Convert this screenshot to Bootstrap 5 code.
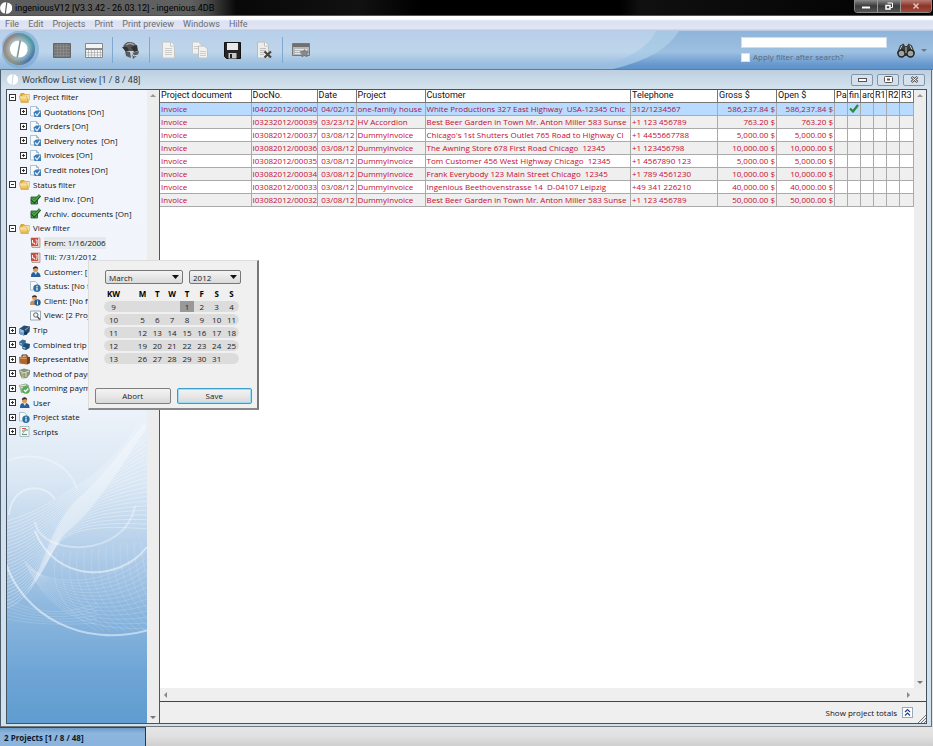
<!DOCTYPE html>
<html lang="en">
<head>
<meta charset="utf-8">
<meta name="viewport" content="width=device-width, initial-scale=1">
<title>ingeniousV12 [V3.3.42 - 26.03.12] - ingenious.4DB</title>
<link href="https://cdn.jsdelivr.net/npm/bootstrap@5.3.0/dist/css/bootstrap.min.css" rel="stylesheet">
<style>
body{font-family:"Open Sans","Noto Sans",sans-serif;font-size:8px;line-height:12px;color:#111;background:#e4e4e4;height:100vh;overflow:hidden}
button,input,select{font:inherit;color:inherit}
button{border:0;background:none;padding:0}
svg{display:block;flex:none}
.apptitle,.menus,.childbar,.docs th{font-family:Roboto,"Open Sans",sans-serif;font-size:9px}
.titlebar{height:16px;background:linear-gradient(90deg,#5d5d5d 0,#616161 190px,#4a4a4a 208px,#080808 236px,#111 360px,#000 420px,#000 620px,#101010 640px,#000);border-bottom:1px solid #555}
.apptitle{color:#000;height:15px;gap:3px}
.winctl{height:13px;border:1px solid #888;border-top:0;border-radius:0 0 4px 4px;overflow:hidden;margin-right:1px}
.winctl button{width:23px;background:linear-gradient(#8a8a8a,#3a3a3a 50%,#555);border-right:1px solid #999;display:flex;align-items:center;justify-content:center}
.winctl button:last-child{width:30px;border:0;background:linear-gradient(#b77c74,#8c3328 50%,#a04a3c)}
.menus{height:15px;background:linear-gradient(#fff 0,#fff 3px,#dae2f4 5px,#e2e4f3 13px,#b7cce2 14px);padding-left:5px;gap:9px}
.menus a{color:#6c6c6c;text-decoration:none}
.toolbar{height:39px;position:relative;background:linear-gradient(#8fb4da,#9cc0e0 55%,#6496cc 90%,#5f93ca);border-bottom:1px solid #5c7c98}
.toolbar .swoosh{position:absolute;left:0;top:0;width:700px;height:38px}
.tools{position:relative}
.tools button{width:32px;height:38px;display:flex;align-items:center;justify-content:center}
.tools .logo{width:46px;justify-content:flex-start;padding-left:2px}
.divide{width:5px;height:26px;border-left:1px solid #7fa9d2;margin-left:2px;margin-right:-2px}
.finder{width:146px;position:relative;padding-top:6px}
.finder input[type=text]{display:block;width:100%;height:11px;border:1px solid #cfdcea;background:#fff;padding:0 2px}
.finder label{gap:3px;color:#56687c;margin-top:3px}
.finder input[type=checkbox]{appearance:none;width:9px;height:9px;background:#fff;border:1px solid #d6e2ee;margin:0}
.search-go{position:relative;gap:6px;width:46px;padding-left:10px}
.child{background:linear-gradient(#bccfe0,#d4e2ee 18px,#cfe0ee);border-left:1px solid #4e5d6b;border-right:1px solid #5f6e7a;border-bottom:1px solid #777;margin-right:1px;padding:0 4px 2px 5px}
.childbar{height:19px;color:#333f4c;padding:0 2px 0 1px}
.childbar button{width:22px;height:12px;border:1px solid #8395a8;border-radius:2px;background:#d5e1ec;display:flex;align-items:center;justify-content:center}
.frame{border:1px solid #46525e;background:#fff;min-height:0}
.side{width:153px;flex:none;border-right:1px solid #555}
.treebox{position:relative;background:linear-gradient(#f2f6fc 0,#f1f5fb 48%,#d9e7f4 62%,#b6d0ea 72%,#8db7de 82%,#6ea5d6 92%,#609cd0);overflow:hidden}
.waves{position:absolute;left:0;bottom:0;width:100%;height:300px}
.tree{position:relative;height:349px;list-style:none;margin:0;padding:0;white-space:nowrap}
.tree li{flex:1;display:flex;align-items:center;gap:3px;padding-left:2px}
.tree li.sub{padding-left:13px}
.tree li.leaf{padding-left:23px}
.tree li.chosen span{background:#e6e9ec}
.expander{width:7px;height:7px;border:1px solid #333!important;position:relative;flex:none;background:linear-gradient(#333,#333) center/3px 1px no-repeat,#fff}
.expander.plus{background:linear-gradient(#333,#333) center/3px 1px no-repeat,linear-gradient(#333,#333) center/1px 3px no-repeat,#fff}
.vscroll{width:12px;background:#eeedee;color:#888;flex:none;padding:4px 0}
.hscroll{height:13px;background:#efeff0;color:#888;padding:0 16px 0 4px}
.tri-u,.tri-d{width:0;border:3px solid transparent}
.tri-u{border-bottom-color:#999;border-top:0}
.tri-d{border-top-color:#777;border-bottom:0}
.tri-l,.tri-r{width:0;border:3px solid transparent}
.tri-l{border-right-color:#888;border-left:0}
.tri-r{border-left-color:#888;border-right:0}
.docs{table-layout:fixed;width:100%;border-collapse:collapse;color:#c60c30}
.docs th,.docs td{height:13px;line-height:12px;padding:0 1px;border-right:1px solid #aaa;border-bottom:1px solid #aaa;white-space:nowrap;overflow:hidden;font-weight:400}
.docs th{color:#111;border-color:#777;height:12px;line-height:11px}
.docs th.tight{padding-right:0}
.docs tbody tr:nth-child(even){background:#efefef}
.docs tbody tr.picked{background:#b8dbff;color:#a3154f}
.docs td.num{text-align:right}
.docs svg{margin:auto}
.totals{height:22px;background:#efeff0;border-top:1px solid #444;gap:5px;padding-right:13px;position:relative}
.totals button{width:11px;height:11px;border:1px solid #9ab;background:#fff;color:#1d3f94}
.grip{position:absolute;right:0;bottom:0}
.calpop{position:absolute;left:88px;top:260px;width:171px;height:150px;background:#f0f0f0;border:1px solid #ddd;border-right:2px solid #777;border-bottom:2px solid #888;padding:9px 5px 4px 6px;color:#222}
.calpop select{appearance:none;height:14px;line-height:11px;border:1px solid #777;border-radius:2px;padding:0 3px;background:url("data:image/svg+xml,%3Csvg xmlns='http://www.w3.org/2000/svg' width='7' height='4'%3E%3Cpath d='M0 0h7L3.5 4z' fill='%23111'/%3E%3C/svg%3E") right 3px center no-repeat,linear-gradient(#f4f4f4,#dadada)}
.pickers{gap:6px;padding-left:10px}
.month{width:78px}
.year{width:52px}
.days{width:135px;margin:3px 0 0 9px;table-layout:fixed;border-collapse:separate;border-spacing:0;text-align:center}
.days th,.days td{padding:0;height:13px;line-height:11px}
.days th{color:#000;font-weight:700}
.days td{background:#dcdcdc;border-top:1px solid #f0f0f0;border-bottom:1px solid #f0f0f0}
.days td:first-child{border-radius:7px 0 0 7px}
.days td:last-child{border-radius:0 7px 7px 0}
.days td.today{background:#999}
.days tr>:first-child{text-align:center;padding-right:12px}
.calbtns{gap:6px}
.calbtns button{flex:1;height:16px;border:1px solid #808080;border-radius:2px;background:linear-gradient(#f3f3f3,#e8e8e8 50%,#d8d8d8)}
.calbtns .prime{border:1px solid #3c9ecb;box-shadow:inset 0 0 0 1px #9edcf3}
.status{height:19px;background:linear-gradient(#e6e6e6 0,#e0e0e0 9px,#cfcfcf)}
.status div{width:146px;height:19px;padding:4px 0 0 4px;background:linear-gradient(#6a9bc9,#8db5dd 5px,#8ab4dd);border-right:1px solid #333;border-top:1px solid #345;font-weight:700;color:#0b1a2b}
</style>
</head>
<body class="d-flex flex-column">
<svg width="0" height="0" class="position-absolute" aria-hidden="true">
<defs>
<linearGradient id="fold" x2="0" y2="1"><stop stop-color="#fff0b0"/><stop offset="1" stop-color="#e2ab3c"/></linearGradient>
<symbol id="i-folder" viewBox="0 0 11 11"><path d="M1 2.500 2 1h3l1 1.200h3.500V9H2z" fill="#d9a43b"/><path d="M3 2.500h7.500V8H4z" fill="#f7e3a0" stroke="#cf9f45" stroke-width=".5"/><path d="M0 4h7.500l2 6.500H2z" fill="url(#fold)" stroke="#c6923a" stroke-width=".5"/></symbol>
<symbol id="i-doc" viewBox="0 0 11 11"><path d="M.5.500h6l2 2V10h-8z" fill="#f5fafd" stroke="#8fa9bd" stroke-width=".7"/><path d="M6.500.5v2h2" fill="none" stroke="#7f9bb2" stroke-width=".7"/><path d="M3.500 6.500 6 4.500h5V11H4.500z" fill="#3f7cb6"/><path d="m5 7.500 2 2.200L10.200 5.500" stroke="#dff0ff" fill="none" stroke-width="1.200"/></symbol>
<symbol id="i-check" viewBox="0 0 11 11"><path d="M1 3h6.500v7H1z" fill="#58a05a" stroke="#1d5022" stroke-width=".8"/><path d="m1.500 5 2.800 3L10 1.300" fill="none" stroke="#1e5a20" stroke-width="3"/><path d="m2 5 2.300 2.300L9.700 1.300" fill="none" stroke="#4fae4a" stroke-width="1.300"/></symbol>
<symbol id="i-date" viewBox="0 0 11 11"><path d="M1 1h9v9.500H2z" fill="#e8d2cb" stroke="#a8857c" stroke-width=".7"/><path d="M1 1h7v8H1z" fill="#c9503f"/><path d="M2.500 3v3h2v1.500M5.500 3H7v3L6 8" fill="none" stroke="#fff" stroke-width=".9"/></symbol>
<symbol id="i-user" viewBox="0 0 11 11"><path d="M1 11c0-4 1-5 4.500-5s5 1.500 5 5z" fill="#2b5f98"/><path d="m4 6 2 3 1-3z" fill="#d3e5f3"/><circle cx="5.500" cy="3.500" r="2.600" fill="#dc9e60"/><path d="M2.800 3C3-.5 8-.8 8.200 3L6.500 2z" fill="#3c2412"/></symbol>
<symbol id="i-info" viewBox="0 0 11 11"><path d="M.5.500h5l2 2V9h-7z" fill="#f4f9fc" stroke="#96abbb" stroke-width=".7"/><circle cx="7" cy="7.200" r="3.700" fill="#2e6f9f"/><path d="M7 4.800v1.100M7 6.500v3" stroke="#fff" stroke-width="1.200"/></symbol>
<symbol id="i-client" viewBox="0 0 11 11"><path d="M0 10c0-3.500 1-4.500 4-4.500s4 1 4 4.500z" fill="#c19456"/><circle cx="4.500" cy="3" r="2.400" fill="#d9a069"/><path d="M2 2.500C2-.6 7-.6 7 2.500L4.500 1.800z" fill="#3b281b"/><circle cx="7.500" cy="7.500" r="3.200" fill="#245c94"/><path d="M7.500 5.500v1M7.500 7v2.500" stroke="#fff"/></symbol>
<symbol id="i-view" viewBox="0 0 11 11"><path d="M.5 1h10v9H.5z" fill="#f7f9fb" stroke="#8794a0" stroke-width=".8"/><circle cx="5.800" cy="5" r="2.200" fill="#eef6fb" stroke="#555" stroke-width=".9"/><path d="m7.300 6.700 2.500 2.800" stroke="#444" stroke-width="1.200"/></symbol>
<symbol id="i-trip" viewBox="0 0 11 11"><path d="m0 4 5-3.500 6 1L10.500 7 5 10.500.5 9z" fill="#234d76"/><path d="m0 4 5 1.500v5L.5 9z" fill="#6f9fc9"/><path d="m1 4.500 3 1v1.500L1 6zM6 5l3.500-2.500" stroke="#b8d8ef" stroke-width=".7" fill="none"/><circle cx="7" cy="8.500" r="1.400" fill="#162b42"/></symbol>
<symbol id="i-trips" viewBox="0 0 11 11"><path d="m0 3 3.500-2.500 3.500 1-.5 3L3 7 .5 6z" fill="#386c99"/><path d="m3 7 3.500-3 4.500 1-.5 4L7 11l-3.500-1z" fill="#1f4c75"/><path d="m3.500 7.500 3 1v1.500l-3-1zM.5 3.500l2.500.8v1.500L.8 5z" fill="#88b8db"/></symbol>
<symbol id="i-rep" viewBox="0 0 11 11"><path d="M3 3V1h5v2" stroke="#4d2a13" fill="none"/><path d="m0 3 8-.7 3 1V9l-3 1.500L.5 9.500z" fill="#b0652c"/><path d="M8 2.500 11 3.300V9l-3 1.500z" fill="#75401b"/><path d="m.5 4 7 .5" stroke="#e0a468"/></symbol>
<symbol id="i-pay" viewBox="0 0 11 11"><path d="m0 2 5-1.500L11 2v4L8 10l-5 .5L1 7z" fill="#87937a"/><path d="m1 3 4 2 5-2M3 5l1 5M7 5v4" stroke="#e2e7d0" fill="none"/><circle cx="4" cy="7.500" r="1.500" fill="#b9a65a"/></symbol>
<symbol id="i-income" viewBox="0 0 11 11"><path d="m0 2 7-1.500 3 2V9L2 10z" fill="#98a88e"/><path d="m1 3 6-1M1.500 5 4 4.500" stroke="#e8eedf"/><circle cx="7" cy="7" r="3.800" fill="#4fae50"/><path d="m5 7 1.500 1.700L9.300 5.500" stroke="#fff" stroke-width="1.200" fill="none"/></symbol>
<symbol id="i-script" viewBox="0 0 11 11"><path d="M1 .5h9v10H1z" fill="#f3f7f5" stroke="#9aaeb0" stroke-width=".8"/><path d="M3 2.500h4M3 5h2" stroke="#c8584f"/><path d="M5 4h4M3 8.500h5" stroke="#55957a"/><path d="m3 8 5-5" stroke="#888" stroke-width=".6"/></symbol>
<symbol id="i-mark" viewBox="0 0 12 12"><path d="M6.200.3A5.700 5.700 0 0 0 4.800 11.600zM7.400.4A5.700 5.700 0 0 1 5.900 11.700z" fill="#fff"/></symbol>
</defs>
</svg>

<header class="titlebar d-flex align-items-start justify-content-between flex-shrink-0">
  <div class="d-flex align-items-center apptitle"><svg width="12" height="12"><use href="#i-mark"/></svg><span>ingeniousV12 [V3.3.42 - 26.03.12] - ingenious.4DB</span></div>
  <div class="winctl d-flex">
    <button aria-label="Minimize"><svg width="10" height="8"><path d="M1 4.500h8v2H1z" fill="#fff"/></svg></button>
    <button aria-label="Restore"><svg width="10" height="9"><path d="M3.500 1h5v4.500h-2" fill="none" stroke="#fff"/><path d="M2 3.500h4V7H2z" fill="none" stroke="#fff" stroke-width="1.500"/></svg></button>
    <button aria-label="Close"><svg width="8" height="8"><path d="m1.500 1.500 5 5m0-5-5 5" stroke="#e2c4bd" stroke-width="1.500"/></svg></button>
  </div>
</header>
<nav class="menus d-flex align-items-center flex-shrink-0"><a href="#">File</a><a href="#">Edit</a><a href="#">Projects</a><a href="#">Print</a><a href="#">Print preview</a><a href="#">Windows</a><a href="#">Hilfe</a></nav>

<div class="toolbar d-flex flex-shrink-0">
  <svg class="swoosh" viewBox="0 0 700 38" preserveAspectRatio="none" aria-hidden="true"><defs><linearGradient id="sw" x2="0" y2="1"><stop stop-color="#b7cfe9"/><stop offset=".55" stop-color="#bed5eb"/><stop offset=".85" stop-color="#9dc0e1"/><stop offset="1" stop-color="#93b9dd"/></linearGradient></defs>
  <path d="M0 0H679Q664 26 613 38H0z" fill="#b2d3e9" opacity=".65"/><path d="M0 0H656Q646 24 592 38H0z" fill="url(#sw)"/></svg>
  <div class="tools d-flex align-items-center flex-grow-1">
    <button class="logo" aria-label="ingenious"><svg width="38" height="38" viewBox="0 0 38 38"><defs><linearGradient id="ring" x2="1" y2="1"><stop stop-color="#a8624e"/><stop offset=".3" stop-color="#8f9c98"/><stop offset=".6" stop-color="#5fa9b1"/><stop offset="1" stop-color="#3c4fa0"/></linearGradient><linearGradient id="ring2" x1="1" x2="0" y2="1"><stop stop-color="#1fa3a4"/><stop offset=".5" stop-color="#779" stop-opacity="0"/><stop offset="1" stop-color="#cf8a42"/></linearGradient><radialGradient id="halo"><stop offset=".4" stop-color="#e8f4f4" stop-opacity=".6"/><stop offset="1" stop-color="#fff" stop-opacity="0"/></radialGradient></defs><circle cx="18" cy="18.500" r="19" fill="#74a7d4" opacity=".6"/><circle cx="17" cy="18" r="16" fill="url(#ring)"/><circle cx="17" cy="18" r="16" fill="url(#ring2)"/><circle cx="17" cy="18" r="14" fill="url(#halo)"/><path d="M17.500 10A8 8 0 0 0 14.300 25.900zM19 10.200A8 8 0 0 1 16 26.200z" fill="#fff"/><path d="m18.300 9.500-3 17" stroke="#7f9097" stroke-width="1.300"/></svg></button>
    <button aria-label="List"><svg width="18" height="15"><path d="M.5.5h17v14H.5z" fill="#777" stroke="#666"/><path d="M1 3.500h16M1 6.500h16M1 9.500h16M1 12.500h16M4.500 1v13M7.500 1v13M10.500 1v13M13.500 1v13" stroke="#929292" stroke-width=".6"/></svg></button>
    <button aria-label="Table"><svg width="18" height="15"><path d="M.5.500h17v14H.5z" fill="#f4f4f4" stroke="#888"/><path d="M0 5h18v2H0z" fill="#85888a"/><path d="M1 9.500h16M1 12h16M3.500 7v7M6.500 7v7M9.500 7v7M12.500 7v7M15.500 7v7" stroke="#aaa" stroke-width=".7"/></svg></button>
    <span class="divide"></span>
    <button aria-label="Refresh"><svg width="18" height="18"><path d="M1 7C2 1 7 0 12 2l3 3v5H9L4 10z" fill="#555"/><path d="M0 6h5l2 3-3 2zM9 6l6-2 1 6-4 1z" fill="#333"/><path d="M4 4q4-3 8 0" stroke="#a7a7a7" fill="none" stroke-width="1.500"/><path d="m3 10 5 1 1 6-5-2zM10 12l7-2-1 4-5 4z" fill="#5a5a5a"/><path d="m10 12 2 3 4-1" fill="none" stroke="#ddd"/></svg></button>
    <span class="divide"></span>
    <button aria-label="New document"><svg width="15" height="18"><path d="M1.500 1h8L13.500 5v12h-12z" fill="#f1f1ed" stroke="#c2c6c8"/><path d="M9.500 1v4h4" fill="#fff" stroke="#c4c4c4"/><path d="M4 7.500h7M4 9.500h7M4 11.500h7M4 13.500h7" stroke="#ccc"/></svg></button>
    <button aria-label="Copy document"><svg width="18" height="18"><path d="M1.500 1h6l3 3v9h-9z" fill="#f1f1ed" stroke="#c6cacc"/><path d="M7.500 5h6l3 3v9h-9z" fill="#f1f1ed" stroke="#bec2c5"/><path d="M3 5.500h4M3 7.500h4M9 10.500h6M9 12.500h6M9 14.500h6" stroke="#ccc"/></svg></button>
    <button aria-label="Save"><svg width="17" height="17"><path d="M.5.500h16v16h-14l-2-2z" fill="#262626" stroke="#111"/><path d="M3 1h11v7H3z" fill="#e9e9e9"/><path d="M4.500 11h8v5.500h-8z" fill="#c9c9c9"/><path d="M6 12h2v4H6z" fill="#222"/></svg></button>
    <button aria-label="Delete document"><svg width="17" height="18"><path d="M1.500 1h7l4 4v12h-11z" fill="#ecece8" stroke="#b9bcbe"/><path d="M8.500 1v4h4" fill="#fff" stroke="#c0c0c0"/><path d="M4 7.500h6M4 9.500h6M4 11.500h4M4 13.500h4" stroke="#bfbfbf"/><path d="m8.500 10.500 6.500 6m0-6-6.500 6" stroke="#444" stroke-width="2.200"/></svg></button>
    <span class="divide"></span>
    <button aria-label="Form"><svg width="19" height="17"><path d="M.5 1.500h17v12H.5z" fill="#b4b8b8" stroke="#777"/><path d="M1 2h16v3H1z" fill="#707070"/><path d="M3 7.500h12M3 9.500h5M3 11.500h5" stroke="#e4e4e4"/><path d="m12.500 7.500 1.300 2 2.700.3-1.700 2 .4 3-2.700-1.200-2.700 1.200.4-3-1.700-2 2.700-.3z" fill="#8a8a8a" stroke="#666" stroke-width=".6"/></svg></button>
  </div>
  <div class="finder"><input type="text" aria-label="Search"><label class="d-flex align-items-center"><input type="checkbox"><span>Apply filter after search?</span></label></div>
  <div class="search-go d-flex align-items-center"><button aria-label="Find"><svg width="18" height="15"><path d="M0 10 3 2.500 6.500.5 8 3h2L11.500.5 15 2.500 18 10l-2 3H2z" fill="#3b3f3c"/><circle cx="4.500" cy="10.500" r="3.500" fill="#9da5a4" stroke="#222" stroke-width="1.400"/><circle cx="13.500" cy="10.500" r="3.500" fill="#9da5a4" stroke="#222" stroke-width="1.400"/><path d="m5 2.500-2 4M13 2.500l2 4" stroke="#c5cbc8"/><path d="M8 4h2v6H8z" fill="#777e7a"/></svg></button><span class="tri-d"></span></div>
</div>

<main class="child d-flex flex-column flex-grow-1 overflow-hidden">
  <div class="childbar d-flex align-items-center justify-content-between flex-shrink-0">
    <div class="d-flex align-items-center gap-1"><svg width="11" height="11"><use href="#i-mark"/></svg><span>Workflow List view [1 / 8 / 48]</span></div>
    <div class="d-flex gap-1"><button aria-label="Minimize list"><svg width="9" height="5"><rect x=".5" y="1.500" width="8" height="3" fill="#fff" stroke="#555"/></svg></button><button aria-label="Restore list"><svg width="9" height="7"><rect x=".5" y=".5" width="8" height="6" rx="1" fill="#fff" stroke="#555"/><path d="M3 2.500h3v2H3z" fill="#555"/></svg></button><button aria-label="Close list"><svg width="9" height="7"><path d="m1.500 1 6 5m0-5-6 5" stroke="#555" stroke-width="2.600"/><path d="m1.800 1.200 5.400 4.600m0-4.600-5.400 4.600" stroke="#fff"/></svg></button></div>
  </div>
  <div class="frame d-flex flex-grow-1">
    <aside class="side d-flex">
      <div class="treebox flex-grow-1">
        <svg class="waves" viewBox="0 0 140 300" preserveAspectRatio="none" aria-hidden="true"><g id="waves" fill="none" stroke="#fff"></g></svg>
        <ul class="tree d-flex flex-column" id="tree"></ul>
      </div>
      <div class="vscroll d-flex flex-column align-items-center justify-content-between"><span class="tri-u"></span><span class="tri-d"></span></div>
    </aside>
    <section class="d-flex flex-column flex-grow-1 overflow-hidden">
      <div class="d-flex flex-grow-1">
        <div class="flex-grow-1 overflow-hidden">
          <table class="docs">
            <colgroup><col style="width:91px"><col style="width:66px"><col style="width:39px"><col style="width:69px"><col><col style="width:87px"><col style="width:59px"><col style="width:58px"><col style="width:13px"><col style="width:13px"><col style="width:13px"><col style="width:13px"><col style="width:13px"><col style="width:14px"></colgroup>
            <thead><tr><th>Project document</th><th>DocNo.</th><th>Date</th><th>Project</th><th>Customer</th><th>Telephone</th><th>Gross $</th><th>Open $</th><th class="tight">Pai</th><th class="tight">fin.</th><th class="tight">arc</th><th class="tight">R1</th><th class="tight">R2</th><th class="tight">R3</th></tr></thead>
            <tbody id="rows"></tbody>
          </table>
        </div>
        <div class="vscroll d-flex flex-column align-items-center justify-content-between"><span class="tri-u"></span><span class="tri-d"></span></div>
      </div>
      <div class="hscroll d-flex align-items-center justify-content-between"><span class="tri-l"></span><span class="tri-r"></span></div>
      <div class="totals d-flex align-items-center justify-content-end"><label for="tot">Show project totals</label><button id="tot"><svg width="9" height="9"><path d="m2 4 2.500-2.500L7 4M2 7.500 4.500 5 7 7.500" fill="none" stroke="currentColor" stroke-width="1.200"/></svg></button><svg class="grip" width="9" height="9"><path d="m1 9 8-8M4 9l5-5M7 9l2-2" stroke="#777"/></svg></div>
    </section>
  </div>
</main>
<footer class="status flex-shrink-0"><div>2 Projects [1 / 8 / 48]</div></footer>

<div class="calpop d-flex flex-column">
  <div class="pickers d-flex"><select class="month" aria-label="Month"><option>March</option></select><select class="year" aria-label="Year"><option>2012</option></select></div>
  <table class="days"><colgroup><col style="width:31px"><col><col><col><col><col><col><col></colgroup><thead><tr><th>KW</th><th>M</th><th>T</th><th>W</th><th>T</th><th>F</th><th>S</th><th>S</th></tr></thead><tbody id="days"></tbody></table>
  <div class="calbtns d-flex mt-auto"><button>Abort</button><button class="prime">Save</button></div>
</div>

<script>
const tree=[["m","folder","Project filter"],["p","doc","Quotations [On]",1],["p","doc","Orders [On]",1],["p","doc","Delivery notes\u00a0 [On]",1],["p","doc","Invoices [On]",1],["p","doc","Credit notes [On]",1],["m","folder","Status filter"],["","check","Paid inv. [On]"],["","check","Archiv. documents [On]"],["m","folder","View filter"],["","date","From: 1/16/2006"],["","date","Till: 7/31/2012"],["","user","Customer: [No filter]"],["","info","Status: [No filter]"],["","client","Client: [No filter]"],["","view","View: [2 Projects]"],["p","trip","Trip"],["p","trips","Combined trip"],["p","rep","Representative"],["p","pay","Method of payment"],["p","income","Incoming payments"],["p","user","User"],["p","info","Project state"],["p","script","Scripts"]];
document.getElementById("tree").innerHTML=tree.map(([e,i,t,sub])=>`<li class="${sub?"sub":e?"":"leaf"} ${t.startsWith("From")?"chosen":""}">${e?`<button class="expander ${e==="p"?"plus":""}" aria-label="Toggle ${t}"></button>`:""}<svg width="11" height="11"><use href="#i-${i}"/></svg><span>${t}</span></li>`).join("");
const rows=[["I04022012/00040","04/02/12","one-family house","White Productions 327 East Highway\u00a0 USA-12345 Chic","312/1234567","586,237.84 $"],["I03232012/00039","03/23/12","HV Accordion","Best Beer Garden in Town Mr. Anton Miller 583 Sunse","+1 123 456789","763.20 $"],["I03082012/00037","03/08/12","DummyInvoice","Chicago's 1st Shutters Outlet 765 Road to Highway Cl","+1 4455667788","5,000.00 $"],["I03082012/00036","03/08/12","DummyInvoice","The Awning Store 678 First Road Chicago\u00a0 12345","+1 123456798","10,000.00 $"],["I03082012/00035","03/08/12","DummyInvoice","Tom Customer 456 West Highway Chicago\u00a0 12345","+1 4567890 123","5,000.00 $"],["I03082012/00034","03/08/12","DummyInvoice","Frank Everybody 123 Main Street Chicago\u00a0 12345","+1 789 4561230","10,000.00 $"],["I03082012/00033","03/08/12","DummyInvoice","Ingenious Beethovenstrasse 14\u00a0 D-04107 Leipzig","+49 341 226210","40,000.00 $"],["I03082012/00032","03/08/12","DummyInvoice","Best Beer Garden in Town Mr. Anton Miller 583 Sunse","+1 123 456789","50,000.00 $"]];
const tick='<svg width="10" height="9"><path d="m1 4.500 3 3L9 1" fill="none" stroke="#2c8a3b" stroke-width="2.200"/></svg>';
document.getElementById("rows").innerHTML=rows.map((r,n)=>`<tr class="${n?"":"picked"}"><td>Invoice</td><td>${r[0]}</td><td class="num">${r[1]}</td><td>${r[2]}</td><td>${r[3]}</td><td>${r[4]}</td><td class="num">${r[5]}</td><td class="num">${r[5]}</td><td></td><td>${n?"":tick}</td><td></td><td></td><td></td><td></td></tr>`).join("");
let h="";
for(let w=0;w<5;w++){h+=`<tr><td>${9+w}</td>`;for(let d=0;d<7;d++){const n=w*7+d-2;h+=`<td class="${n===1?"today":""}">${n>0&&n<32?n:""}</td>`}h+="</tr>"}
document.getElementById("days").innerHTML=h;
/* ribbon: lines blended between an upper and a lower edge curve */
const up=[0,98,30,90,55,72,75,60,95,48,120,20,138,-6],low=[0,185,25,175,35,145,48,125,61,105,90,102,142,106];
let g='<path d="M20 168C40 140 42 100 75 72 95 55 120 20 138 0L140 4C110 50 85 90 61 108 45 122 40 150 20 168z" fill="#fff" fill-opacity=".3" stroke="none"/>';
for(let i=0;i<=24;i++){const p=up.map((v,k)=>(v+(low[k]-v)*i/24).toFixed(1));g+=`<path d="M${p[0]} ${p[1]}C${p.slice(2).join(" ")}" stroke-opacity=".4" stroke-width=".8"/>`}
for(let i=0;i<14;i++)g+=`<path d="M${30-i} ${150-i}C${50} ${160+i*4} ${100+i} ${165+i*3} 140 ${128+i*6}" stroke-opacity=".2" stroke-width=".8"/><path d="M${50+i*7} ${130-i}C${40+i*8} ${165} ${60+i*8} 190 ${90+i*7} 208" stroke-opacity=".16" stroke-width=".8"/>`;
for(let i=0;i<6;i++)g+=`<path d="M0 ${176+i*4}C30 ${192+i*2} 60 ${192+i*2} 90 ${180+i*4}" stroke-opacity=".14"/>`;
g+='<path d="M28 99C34 134 118 136 128 83" stroke-opacity=".35" stroke-width="2"/><path d="M28 108C48 160 112 160 140 124" stroke-opacity=".5" stroke-width="2"/><path d="M-2 138C15 192 75 226 142 207" stroke-opacity=".5" stroke-width="2"/><path d="M2 92C4 62 36 58 48 76" stroke-opacity=".4" stroke-width="2"/><path d="M0 38C30 26 62 40 70 66" stroke-opacity=".3" stroke-width="2"/>';
document.getElementById("waves").innerHTML=g;
</script>
<script src="https://cdn.jsdelivr.net/npm/bootstrap@5.3.0/dist/js/bootstrap.bundle.min.js"></script>
</body>
</html>
